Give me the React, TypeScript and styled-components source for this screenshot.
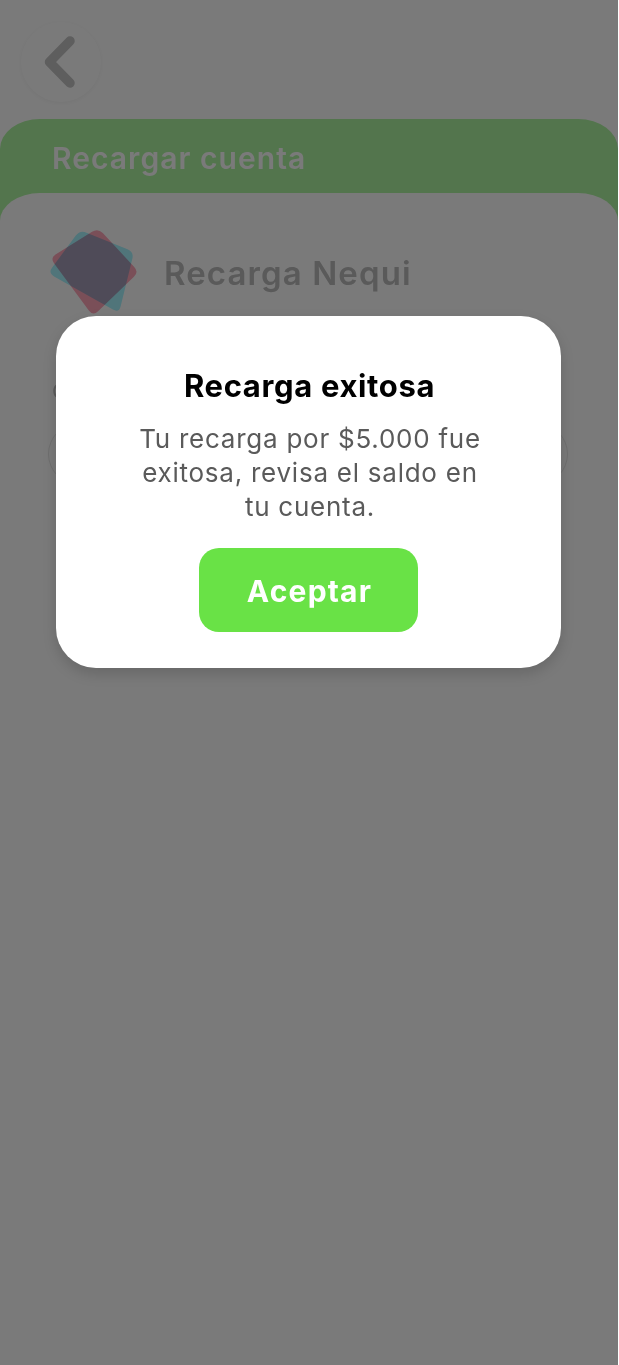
import React from "react";
import styled, { createGlobalStyle } from "styled-components";

const GlobalStyle = createGlobalStyle`
  html, body {
    margin: 0;
    padding: 0;
    background: #ffffff;
  }
  body {
    font-family: "Inter", "Noto Sans", sans-serif;
  }
`;

const Screen = styled.div`
  position: relative;
  width: 618px;
  height: 1365px;
  overflow: hidden;
  background: #ffffff;
`;

const TopBar = styled.div`
  height: 119px;
  padding: 22px 0 0 21px;
  box-sizing: border-box;
`;

const BackButton = styled.button`
  display: block;
  width: 80px;
  height: 80px;
  padding: 0;
  border: none;
  border-radius: 50%;
  background: #ffffff;
  box-shadow: 0 1px 5px rgba(0, 0, 0, 0.05);
`;

const GreenPanel = styled.section`
  height: 1246px;
  border-radius: 40px 40px 0 0 / 30px 30px 0 0;
  background: #aef4a2;
  overflow: hidden;
`;

const PanelTitle = styled.h1`
  height: 74px;
  margin: 0;
  padding: 21px 0 0 52px;
  box-sizing: border-box;
  font-size: 30px;
  line-height: 36px;
  font-weight: 600;
  letter-spacing: 1.05px;
  color: #ffffff;
`;

const WhitePanel = styled.div`
  height: 100%;
  padding: 35px 50px 0 48px;
  border-radius: 40px 40px 0 0 / 28px 28px 0 0;
  background: #ffffff;
`;

const Heading = styled.div`
  display: flex;
  align-items: center;
  gap: 24px;
`;

const HeadingText = styled.h2`
  margin: 0;
  font-size: 33px;
  font-weight: 600;
  letter-spacing: 1.1px;
  color: #bcbcbc;
`;

const AmountLabel = styled.div`
  margin-top: 59px;
  padding-left: 4px;
  font-size: 22px;
  line-height: 28px;
  color: #c0c0c0;
`;

const AmountField = styled.div`
  height: 60px;
  margin-top: 18px;
  border: 1px solid #e8e8e8;
  border-radius: 31px;
`;

const Overlay = styled.div`
  position: absolute;
  inset: 0;
  background: rgba(0, 0, 0, 0.52);
`;

const Dialog = styled.div`
  position: absolute;
  top: 316px;
  left: 56px;
  display: flex;
  flex-direction: column;
  align-items: center;
  width: 505px;
  height: 352px;
  padding-top: 52px;
  box-sizing: border-box;
  border-radius: 40px;
  background: #ffffff;
  box-shadow: 0 6px 14px rgba(0, 0, 0, 0.15);
`;

const DialogTitle = styled.h3`
  margin: 0 0 0 2px;
  font-size: 31px;
  line-height: 36px;
  font-weight: 700;
  letter-spacing: 0.65px;
  color: #000000;
`;

const DialogText = styled.p`
  width: 350px;
  margin: 18px 0 0 3px;
  font-size: 26px;
  line-height: 34px;
  font-weight: 400;
  letter-spacing: 0.75px;
  text-align: center;
  color: #5a5a5a;
`;

const AcceptButton = styled.button`
  width: 219px;
  height: 84px;
  margin-top: 24px;
  padding: 2px 0 0 2px;
  border: none;
  border-radius: 20px;
  background: #69e246;
  font-family: inherit;
  font-size: 30px;
  font-weight: 700;
  letter-spacing: 1.2px;
  color: #ffffff;
`;

const LogoShape = styled.path`
  mix-blend-mode: multiply;
`;

type Point = [number, number];

// closes a polygon with soft corners, the logo tiles are not true squares
const roundedPath = (points: Point[], r: number) => {
  const toward = (a: Point, b: Point): Point => {
    const len = Math.hypot(b[0] - a[0], b[1] - a[1]);
    return [a[0] + ((b[0] - a[0]) * r) / len, a[1] + ((b[1] - a[1]) * r) / len];
  };
  return (
    points
      .map((p, i) => {
        const prev = points[(i + points.length - 1) % points.length];
        const next = points[(i + 1) % points.length];
        const start = toward(p, prev);
        const end = toward(p, next);
        return `${i === 0 ? "M" : "L"}${start[0]} ${start[1]} Q${p[0]} ${p[1]} ${end[0]} ${end[1]}`;
      })
      .join(" ") + " Z"
  );
};

const tealTile: Point[] = [
  [32, 2],
  [86, 24],
  [71, 85],
  [0, 45],
];

const redTile: Point[] = [
  [50, 0],
  [91, 44],
  [45, 88],
  [2, 30],
];

const BackIcon = () => (
  <svg width="80" height="80" viewBox="0 0 80 80" fill="none">
    <path
      d="M49 19 L28.5 40 L49 61"
      stroke="#c4c4c4"
      strokeWidth="9.5"
      strokeLinecap="round"
      strokeLinejoin="round"
    />
  </svg>
);

const NequiLogo = () => (
  <svg width="92" height="90" viewBox="0 0 92 90">
    <LogoShape d={roundedPath(tealTile, 7)} fill="#a7f4fe" />
    <LogoShape d={roundedPath(redTile, 7)} fill="#fea5b9" />
  </svg>
);

export default function App() {
  return (
    <Screen>
      <GlobalStyle />
      <TopBar>
        <BackButton aria-label="Volver">
          <BackIcon />
        </BackButton>
      </TopBar>
      <GreenPanel>
        <PanelTitle>Recargar cuenta</PanelTitle>
        <WhitePanel>
          <Heading>
            <NequiLogo />
            <HeadingText>Recarga Nequi</HeadingText>
          </Heading>
          <AmountLabel>Cuanto</AmountLabel>
          <AmountField />
        </WhitePanel>
      </GreenPanel>
      <Overlay />
      <Dialog>
        <DialogTitle>Recarga exitosa</DialogTitle>
        <DialogText>Tu recarga por $5.000 fue exitosa, revisa el saldo en tu cuenta.</DialogText>
        <AcceptButton>Aceptar</AcceptButton>
      </Dialog>
    </Screen>
  );
}
